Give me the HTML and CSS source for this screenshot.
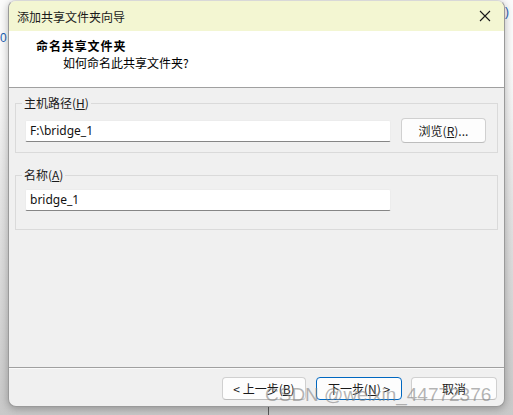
FILE: index.html
```html
<!DOCTYPE html>
<html lang="zh-CN">
<head>
<meta charset="utf-8">
<title>添加共享文件夹向导</title>
<link rel="stylesheet" href="styles.css">
</head>
<body>
<div class="backdrop">
  <span class="bg-char bg-left">0</span>
  <span class="bg-char bg-right">)</span>
  <div class="dialog">
    <div class="titlebar">
      <span class="title">添加共享文件夹向导</span>
      <span class="close">
        <svg width="12" height="12" viewBox="0 0 12 12"><path d="M1 1L11 11M11 1L1 11" stroke="#1a1a1a" stroke-width="1.1" fill="none"/></svg>
      </span>
    </div>
    <div class="header">
      <div class="h-title">命名共享文件夹</div>
      <div class="h-sub">如何命名此共享文件夹?</div>
    </div>
    <div class="content">
      <fieldset class="group group-path">
        <legend>主机路径(<u>H</u>)</legend>
        <div class="row">
          <div class="input">F:\bridge_1</div>
          <button class="btn browse">浏览(<u>R</u>)...</button>
        </div>
      </fieldset>
      <fieldset class="group group-name">
        <legend>名称(<u>A</u>)</legend>
        <div class="row">
          <div class="input">bridge_1</div>
        </div>
      </fieldset>
    </div>
    <div class="footer">
      <button class="btn prev">&lt; 上一步(<u>B</u>)</button>
      <button class="btn primary">下一步(<u>N</u>) &gt;</button>
      <button class="btn">取消</button>
    </div>
    <div class="watermark">CSDN @weixin_44772376</div>
  </div>
</div>
</body>
</html>
```

FILE: styles.css
```css
html, body {
  margin: 0;
  padding: 0;
}
body {
  width: 513px;
  height: 415px;
  overflow: hidden;
  background: #cfcfcf;
  font-family: "Noto Sans", "Noto Sans CJK SC", sans-serif;
  font-size: 12px;
  color: #000;
}
.backdrop {
  position: relative;
  width: 513px;
  height: 415px;
  background:
    linear-gradient(to right, transparent 268px, #5a5a5a 268px, #5a5a5a 269px, transparent 269px) 0 405px / 513px 10px no-repeat,
    linear-gradient(to bottom, #fbfbfb 0, #fbfbfb 60px, #e4e4e4 200px, #c9c9c9 415px);
}
.bg-char {
  position: absolute;
  color: #1a5fb4;
  font-size: 12px;
  font-family: "Liberation Sans", sans-serif;
}
.bg-left { left: 0; top: 31px; }
.bg-right { left: 505px; top: 5px; }
.dialog {
  position: relative;
  margin-left: 8px;
  width: 497px;
  height: 407px;
  box-sizing: border-box;
  border: 1px solid #9a9a9a;
  border-top-color: #d8d8d8;
  border-radius: 8px;
  background: #f0f0f0;
  box-shadow: 0 2px 8px rgba(0,0,0,0.28);
  display: flex;
  flex-direction: column;
  overflow: hidden;
}
.titlebar {
  height: 30px;
  background: #f3f6d2;
  display: flex;
  align-items: center;
  justify-content: space-between;
  padding: 0 8px 0 8px;
  flex: none;
}
.title {
  font-family: "Noto Sans CJK SC", sans-serif;
  font-size: 12px;
  color: #1a1a1a;
}
.close {
  display: flex;
  width: 24px;
  justify-content: center;
  margin-right: -1px;
}
.header {
  background: #fff;
  border-bottom: 1px solid #a0a0a0;
  box-sizing: border-box;
  height: 57px;
  padding: 6px 0 0 0;
  flex: none;
  display: flex;
  flex-direction: column;
  font-family: "Noto Sans CJK SC", sans-serif;
}
.h-title {
  margin-left: 27px;
  font-weight: bold;
  letter-spacing: 0.9px;
  line-height: 17px;
}
.h-sub {
  margin-left: 54px;
  line-height: 17px;
}
.content {
  flex: 1;
  padding: 8px 6px 0 6px;
  display: flex;
  flex-direction: column;
  gap: 15px;
}
.group {
  margin: 0;
  padding: 0 0 0 9px;
  border: 1px solid #dadada;
  box-sizing: border-box;
  min-width: 0;
}
.group legend {
  font-family: "Noto Sans CJK SC", sans-serif;
  line-height: 14px;
  padding: 0 2px;
  margin-left: -3px;
  color: #1a1a1a;
}
.group-path {
  height: 57px;
  padding-top: 8px;
}
.group-name {
  height: 62px;
  padding-top: 7px;
}
.row {
  display: flex;
  align-items: center;
  gap: 10px;
}
.input {
  width: 366px;
  height: 22px;
  box-sizing: border-box;
  background: #fff;
  border: 1px solid #ececec;
  border-bottom: 1px solid #868686;
  border-radius: 2px;
  padding: 0 4px;
  line-height: 20px;
  font-family: "Noto Sans", sans-serif;
  font-size: 12px;
  color: #111;
}
.btn {
  width: 86px;
  height: 23px;
  box-sizing: border-box;
  background: #fdfdfd;
  border: 1px solid #d0d0d0;
  border-bottom-color: #bdbdbd;
  border-radius: 4px;
  font-family: "Noto Sans CJK SC", sans-serif;
  font-size: 12px;
  color: #1a1a1a;
  padding: 0;
  line-height: 20px;
}
.browse {
  width: 85px;
  height: 25px;
}
.footer {
  flex: none;
  height: 39px;
  box-sizing: border-box;
  border-top: 1px solid #a0a0a0;
  box-shadow: inset 0 1px 0 #fafafa;
  display: flex;
  justify-content: flex-end;
  align-items: flex-start;
  padding: 9px 7px 0 0;
  gap: 9px;
}
.prev {
  width: 84px;
  margin-right: 1px;
}
.primary {
  border-color: #0067c0;
}
.watermark {
  position: absolute;
  left: 256px;
  top: 383px;
  font-family: "Liberation Sans", sans-serif;
  font-size: 19px;
  color: rgba(130,130,130,0.6);
  white-space: nowrap;
  pointer-events: none;
}
```
